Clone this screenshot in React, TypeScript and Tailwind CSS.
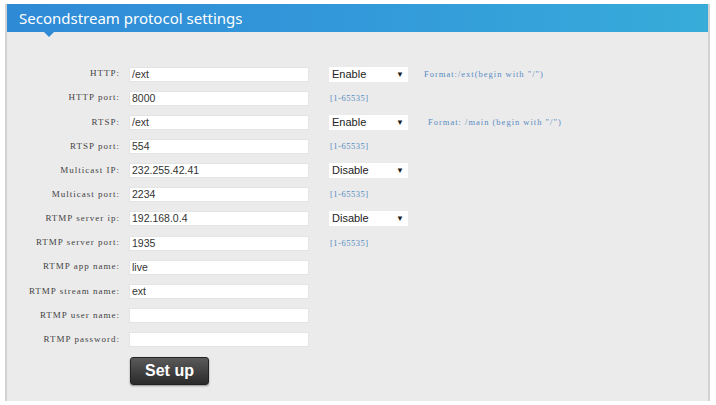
const ROWS: Row[] = [
  { label: 'HTTP:', value: '/ext', select: 'Enable', hint: 'Format:/ext(begin with "/")', hintGap: 'ml-[16px]' },
  { label: 'HTTP port:', value: '8000', range: true },
  { label: 'RTSP:', value: '/ext', select: 'Enable', hint: 'Format: /main (begin with "/")', hintGap: 'ml-[20px]' },
  { label: 'RTSP port:', value: '554', range: true },
  { label: 'Multicast IP:', value: '232.255.42.41', select: 'Disable' },
  { label: 'Multicast port:', value: '2234', range: true },
  { label: 'RTMP server ip:', value: '192.168.0.4', select: 'Disable' },
  { label: 'RTMP server port:', value: '1935', range: true },
  { label: 'RTMP app name:', value: 'live' },
  { label: 'RTMP stream name:', value: 'ext' },
  { label: 'RTMP user name:', value: '' },
  { label: 'RTMP password:', value: '' },
]

type Row = {
  label: string
  value: string
  select?: string
  hint?: string
  hintGap?: string
  range?: boolean
}

function FormRow({ row }: { row: Row }) {
  return (
    <div className="flex h-[24.15px] items-center">
      <div className="w-[116px] shrink-0 pr-[3px] text-right font-['Liberation_Serif',serif] text-[9px] tracking-[1px] text-[#444]">
        {row.label}
      </div>
      <div className="ml-[6px] h-[15px] w-[180px] shrink-0 border border-[#e4e4e4] bg-white pl-[2px] font-['Liberation_Sans',Arial,sans-serif] text-[10.5px] leading-[13px] text-[#333]">
        {row.value}
      </div>
      {row.select && (
        <div className="relative ml-[20px] h-[15px] w-[79px] shrink-0 bg-white pl-[3px] font-['Liberation_Sans',Arial,sans-serif] text-[11px] leading-[15px] text-[#222]">
          {row.select}
          <span className="absolute right-[4px] top-0 text-[8px] leading-[15px]">▼</span>
        </div>
      )}
      {row.range && (
        <div className="ml-[21px] font-['Liberation_Serif',serif] text-[8.5px] tracking-[0.5px] text-[#5a8cc2]">
          [1-65535]
        </div>
      )}
      {row.hint && (
        <div className={`${row.hintGap} font-['Liberation_Serif',serif] text-[8.5px] tracking-[1px] text-[#5a8cc2]`}>
          {row.hint}
        </div>
      )}
    </div>
  )
}

export default function App() {
  return (
    <div className="h-[405px] w-[716px] overflow-hidden bg-white pl-[5px] pt-[4px]">
      <div className="h-[397px] w-[705px] border-x-2 border-[#d2d2d2] bg-[#ebebeb]">
        <div className="relative h-[28px] bg-gradient-to-r from-[#2f8ad6] via-[#3399da] to-[#37acd9] pl-[12px] font-['Noto_Sans',sans-serif] text-[15px] leading-[28px] text-white">
          Secondstream protocol settings
          <span className="absolute left-[37px] top-[28px] h-0 w-0 border-x-[5px] border-t-[5px] border-x-transparent border-t-[#2f8ad6]" />
        </div>
        <div className="pt-[30px]">
          {ROWS.map((r) => (
            <FormRow key={r.label} row={r} />
          ))}
          <div className="ml-[123px] mt-[5px] flex h-[28px] w-[79px] items-center justify-center rounded-[3px] border border-[#222] bg-gradient-to-b from-[#5a5a5a] to-[#2b2b2b] font-['Liberation_Sans',Arial,sans-serif] text-[16px] font-bold text-white shadow-[0_1px_2px_rgba(0,0,0,0.4)]">
            Set up
          </div>
        </div>
      </div>
    </div>
  )
}
